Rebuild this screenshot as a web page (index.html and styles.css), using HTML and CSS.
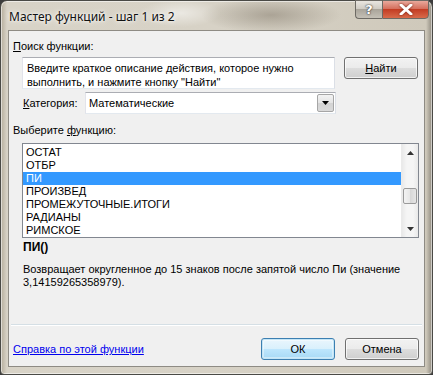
FILE: index.html
```html
<!DOCTYPE html>
<html lang="ru">
<head>
    <meta charset="UTF-8">
    <title>Мастер функций</title>
    <link rel="stylesheet" href="styles.css">
</head>
<body>
    <div class="window">
        <div class="titlebar">
            <div class="title">Мастер функций - шаг 1 из 2</div>
            <div class="caption-buttons">
                <div class="cap help">?</div>
                <div class="cap close">
                    <svg width="14" height="11" viewBox="0 0 14 11">
                        <path d="M2 1 L12 10 M12 1 L2 10" stroke="#fff" stroke-width="3" stroke-linecap="round"/>
                    </svg>
                </div>
            </div>
        </div>

        <div class="client">
            <div class="label"><u>П</u>оиск функции:</div>
            <div class="search-row">
                <div class="textbox">Введите краткое описание действия, которое нужно выполнить, и нажмите кнопку "Найти"</div>
                <button class="btn find"><u>Н</u>айти</button>
            </div>
            <div class="category-row">
                <span class="cat-label"><u>К</u>атегория:</span>
                <div class="select">
                    <span>Математические</span>
                    <div class="drop">
                        <svg width="7" height="4" viewBox="0 0 7 4"><path d="M0 0 H7 L3.5 4 Z" fill="#000"/></svg>
                    </div>
                </div>
            </div>

            <div class="label choose">Выберите <u>ф</u>ункцию:</div>
            <div class="listbox">
                <ul class="items">
                    <li>ОСТАТ</li>
                    <li>ОТБР</li>
                    <li class="selected">ПИ</li>
                    <li>ПРОИЗВЕД</li>
                    <li>ПРОМЕЖУТОЧНЫЕ.ИТОГИ</li>
                    <li>РАДИАНЫ</li>
                    <li>РИМСКОЕ</li>
                </ul>
                <div class="scrollbar">
                    <div class="arrow">
                        <svg width="7" height="4" viewBox="0 0 7 4"><path d="M0 4 H7 L3.5 0 Z" fill="#333"/></svg>
                    </div>
                    <div class="track">
                        <div class="thumb"></div>
                    </div>
                    <div class="arrow">
                        <svg width="7" height="4" viewBox="0 0 7 4"><path d="M0 0 H7 L3.5 4 Z" fill="#333"/></svg>
                    </div>
                </div>
            </div>

            <div class="func-name">ПИ()</div>
            <div class="func-desc">Возвращает округленное до 15 знаков после запятой число Пи (значение 3,14159265358979).</div>

            <div class="separator"></div>
            <div class="footer">
                <a href="#" class="help-link">Справка по этой функции</a>
                <div class="buttons">
                    <button class="btn default">ОК</button>
                    <button class="btn">Отмена</button>
                </div>
            </div>
        </div>
    </div>
</body>
</html>
```

FILE: styles.css
```css
* {
    margin: 0;
    padding: 0;
    box-sizing: border-box;
}

body {
    width: 433px;
    height: 375px;
    overflow: hidden;
    background: #3c3c3c;
    font-family: "Liberation Sans", Arial, sans-serif;
    font-size: 11px;
    color: #000;
}

.window {
    width: 433px;
    height: 375px;
    border: 1px solid #4a4a46;
    border-radius: 7px 7px 4px 4px;
    padding: 0 7px 8px 7px;
    background:
        radial-gradient(ellipse 70px 18px at 270px 14px, rgba(120, 110, 95, 0.45), transparent),
        radial-gradient(ellipse 40px 14px at 180px 12px, rgba(255, 255, 255, 0.5), transparent),
        linear-gradient(to right, #b5ad9c 0, #d8d3c7 6px, #d7d2c6 50%, #cfc9bb calc(100% - 6px), #8f8a7f 100%);
    box-shadow: inset 0 0 0 1px rgba(255, 255, 255, 0.55);
}

.titlebar {
    height: 29px;
    display: flex;
    justify-content: space-between;
    align-items: flex-start;
}

.title {
    font-family: "Noto Sans", "Open Sans", sans-serif;
    font-size: 12px;
    padding: 7px 0 0 1px;
    color: #111;
    text-shadow: 0 0 6px #fff, 0 0 3px #fff;
}

.caption-buttons {
    display: flex;
    margin-right: -4px;
    margin-top: -1px;
}

.cap {
    height: 19px;
    border: 1px solid #6d6a64;
    display: flex;
    align-items: center;
    justify-content: center;
}

.help {
    width: 27px;
    border-right: none;
    border-radius: 0 0 0 4px;
    background: linear-gradient(to bottom, #e9e6e0 0, #d0ccc4 45%, #aaa59b 50%, #c4c0b6 100%);
    color: #fff;
    font-family: "DejaVu Sans", sans-serif;
    font-weight: bold;
    font-size: 13px;
    text-shadow: 0 0 2px #333, 0 0 1px #333;
}

.close {
    width: 47px;
    border-radius: 0 0 4px 0;
    background: linear-gradient(to bottom, #e9a99c 0, #d5705e 45%, #c33d24 50%, #d86a4a 100%);
}

.close svg {
    filter: drop-shadow(0 0 1px #6d1b0d);
}

.client {
    height: 337px;
    background: #f0f0f0;
    border: 1px solid #8e8b84;
    padding: 0 6px 0 4px;
    display: flex;
    flex-direction: column;
}

.label {
    margin-top: 9px;
    line-height: 13px;
}

.search-row {
    display: flex;
    align-items: flex-start;
    margin: 4px 0 0 9px;
}

.textbox {
    width: 313px;
    height: 32px;
    background: #fff;
    border: 1px solid #abadb3;
    border-color: #abadb3 #dbdfe6 #e3e9ef #e2e3ea;
    padding: 3px 0 0 4px;
    line-height: 14px;
}

.btn {
    font-family: "Liberation Sans", Arial, sans-serif;
    font-size: 11px;
    width: 74px;
    height: 22px;
    border: 1px solid #707070;
    border-radius: 3px;
    color: #000;
    background: linear-gradient(to bottom, #f2f2f2 0, #ebebeb 50%, #dddddd 50%, #cfcfcf 100%);
    box-shadow: inset 0 0 0 1px rgba(255, 255, 255, 0.7);
}

.find {
    margin-left: 9px;
}

.category-row {
    display: flex;
    align-items: center;
    margin: 3px 0 0 10px;
}

.cat-label {
    width: 62px;
}

.select {
    width: 251px;
    height: 22px;
    background: #fff;
    border: 1px solid #abadb3;
    border-color: #abadb3 #dbdfe6 #e3e9ef #e2e3ea;
    display: flex;
    align-items: center;
    justify-content: space-between;
    padding-left: 3px;
}

.drop {
    width: 17px;
    height: 18px;
    margin-right: 1px;
    border: 1px solid #a6a6a6;
    border-radius: 2px;
    background: linear-gradient(to bottom, #f3f3f3 0, #e4e4e4 50%, #d3d3d3 50%, #dadada 100%);
    display: flex;
    align-items: center;
    justify-content: center;
}

.choose {
    margin-top: 10px;
}

.listbox {
    margin: 6px 0 0 9px;
    width: 397px;
    height: 95px;
    background: #fff;
    border: 1px solid #828790;
    display: flex;
}

.items {
    list-style: none;
    flex: 1;
    padding-top: 2px;
}

.items li {
    height: 13px;
    line-height: 13px;
    padding-left: 3px;
}

.items li.selected {
    background: #3399ff;
    color: #fff;
}

.scrollbar {
    width: 17px;
    display: flex;
    flex-direction: column;
    background: linear-gradient(to right, #e9e9e9, #f5f5f5 30%, #f5f5f5 70%, #e9e9e9);
    border-left: 1px solid #eaeaea;
}

.arrow {
    height: 17px;
    display: flex;
    align-items: center;
    justify-content: center;
}

.track {
    flex: 1;
    padding-top: 27px;
}

.thumb {
    margin: 0 1px;
    height: 16px;
    border: 1px solid #9a9a9a;
    border-radius: 2px;
    background: linear-gradient(to right, #f3f3f3 0, #e7e7e7 50%, #d6d6d6 50%, #e5e5e5 100%);
}

.func-name {
    margin: 2px 0 0 10px;
    font-weight: bold;
    font-size: 12px;
    line-height: 14px;
}

.func-desc {
    margin: 9px 0 0 10px;
    width: 395px;
    line-height: 13px;
}

.separator {
    margin: auto -4px 0 -2px;
    border-top: 1px solid #d5dfe5;
    border-bottom: 1px solid #fff;
}

.footer {
    display: flex;
    align-items: center;
    justify-content: space-between;
    height: 22px;
    margin: 12px 0 6px 0;
}

.help-link {
    color: #0000ee;
    text-decoration: underline;
}

.buttons {
    display: flex;
    gap: 10px;
    margin-right: -1px;
}

.btn.default {
    border-color: #3c7fb1;
    background: linear-gradient(to bottom, #eaf6fd 0, #d9f0fc 50%, #bee6fd 50%, #a7d9f5 100%);
    box-shadow: inset 0 0 0 1px #c4e5f6, inset 0 0 0 2px rgba(255, 255, 255, 0.4);
}
```
